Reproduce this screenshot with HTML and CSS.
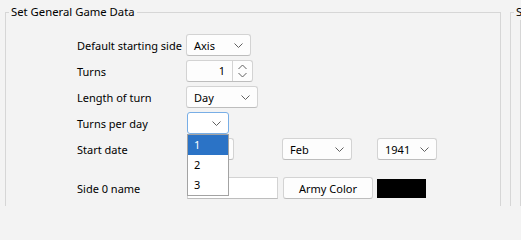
FILE: index.html
```html
<!DOCTYPE html>
<html>
<head>
<meta charset="utf-8">
<link rel="stylesheet" href="styles.css">
</head>
<body>
<div class="panes">
  <fieldset class="group main">
    <legend>Set General Game Data</legend>
    <div class="form">
      <div class="row">
        <span class="label">Default starting side</span>
        <div class="combo w-axis"><span class="val">Axis</span><svg class="chev" width="9" height="5" viewBox="0 0 9 5"><path d="M0.5 0.5 L4.5 4.5 L8.5 0.5" /></svg></div>
      </div>
      <div class="row">
        <span class="label">Turns</span>
        <div class="spin">
          <span class="num">1</span>
          <div class="spinbtn">
            <svg width="9" height="14" viewBox="0 0 9 14"><path d="M0.5 5 L4.5 1 L8.5 5" /><path d="M0.5 9 L4.5 13 L8.5 9" /></svg>
          </div>
        </div>
      </div>
      <div class="row">
        <span class="label">Length of turn</span>
        <div class="combo w-day"><span class="val">Day</span><svg class="chev" width="9" height="5" viewBox="0 0 9 5"><path d="M0.5 0.5 L4.5 4.5 L8.5 0.5" /></svg></div>
      </div>
      <div class="row">
        <span class="label">Turns per day</span>
        <div class="combo w-tpd focused"><span class="val"></span><svg class="chev" width="9" height="5" viewBox="0 0 9 5"><path d="M0.5 0.5 L4.5 4.5 L8.5 0.5" /></svg>
          <ul class="dropdown">
            <li class="sel">1</li>
            <li>2</li>
            <li>3</li>
          </ul>
        </div>
      </div>
      <div class="row">
        <span class="label">Start date</span>
        <div class="combo w-start"><span class="val"></span></div>
        <div class="combo w-month"><span class="val">Feb</span><svg class="chev" width="9" height="5" viewBox="0 0 9 5"><path d="M0.5 0.5 L4.5 4.5 L8.5 0.5" /></svg></div>
        <div class="combo w-year"><span class="val">1941</span><svg class="chev" width="9" height="5" viewBox="0 0 9 5"><path d="M0.5 0.5 L4.5 4.5 L8.5 0.5" /></svg></div>
      </div>
      <div class="row last">
        <span class="label">Side 0 name</span>
        <div class="textbox"></div>
        <div class="button">Army Color</div>
        <div class="swatch"></div>
      </div>
    </div>
  </fieldset>
  <fieldset class="group side">
    <legend>S</legend>
  </fieldset>
</div>
</body>
</html>
```

FILE: styles.css
```css
html, body {
  margin: 0;
  padding: 0;
  background: #f3f3f3;
  font-family: "Noto Sans", "Open Sans", sans-serif;
  font-size: 11px;
  color: #000;
  overflow: hidden;
  width: 521px;
  height: 206px;
}

.panes {
  display: flex;
  padding-left: 5px;
  gap: 9px;
  height: 206px;
  overflow: hidden;
}

.group {
  margin: 4px 0 0 0;
  padding: 0;
  border: 1px solid #d6d6d6;
  border-bottom: none;
  border-radius: 0;
  height: 202px;
  box-sizing: border-box;
  min-width: 0;
}

.group legend {
  margin-left: 3px;
  padding: 0 2px;
  line-height: 16px;
  height: 16px;
  font-size: 11.3px;
}

.main {
  width: 496px;
  flex: none;
}

.side {
  flex: 1;
}

.form {
  padding: 14px 0 0 71px;
  display: flex;
  flex-direction: column;
  gap: 4px;
}

.row {
  display: flex;
  align-items: center;
  height: 22px;
}

.row.last {
  margin-top: 13px;
}

.label {
  width: 109px;
  flex: none;
  white-space: nowrap;
}

.combo {
  position: relative;
  box-sizing: border-box;
  height: 22px;
  background: #fdfdfd;
  border: 1px solid #d3d3d3;
  border-bottom-color: #bdbdbd;
  border-radius: 3px;
  display: flex;
  align-items: center;
  padding-left: 7px;
  flex: none;
}

.combo .val {
  flex: 1;
}

.chev {
  margin-right: 7px;
  flex: none;
}

.chev path, .spinbtn path {
  fill: none;
  stroke: #606060;
  stroke-width: 1;
}

.w-axis { width: 65px; }
.w-day { width: 72px; }
.w-tpd { width: 42px; margin-left: 1px; }
.w-start { width: 47px; margin-left: 1px; }
.w-month { width: 70px; margin-left: 48px; }
.w-year { width: 60px; margin-left: 25px; }

.focused {
  border-color: #78aee6;
  background: #ffffff;
}

.spin {
  box-sizing: border-box;
  width: 67px;
  height: 22px;
  background: #fdfdfd;
  border: 1px solid #d3d3d3;
  border-bottom-color: #bdbdbd;
  border-radius: 3px;
  display: flex;
  align-items: stretch;
}

.spin .num {
  flex: 1;
  text-align: right;
  padding-right: 7px;
  line-height: 20px;
}

.spinbtn {
  width: 19px;
  border-left: 1px solid #d3d3d3;
  display: flex;
  align-items: center;
  justify-content: center;
}

.dropdown {
  position: absolute;
  left: -1px;
  top: 21px;
  width: 42px;
  box-sizing: border-box;
  margin: 0;
  padding: 0;
  list-style: none;
  background: #ffffff;
  border: 1px solid #a3a3a3;
  z-index: 5;
}

.dropdown li {
  height: 20px;
  line-height: 20px;
  padding-left: 6px;
}

.dropdown li.sel {
  background: #2b73c6;
  color: #ffffff;
}

.textbox {
  box-sizing: border-box;
  width: 91px;
  height: 22px;
  margin-left: 1px;
  background: #ffffff;
  border: 1px solid #d3d3d3;
  border-bottom-color: #bdbdbd;
  flex: none;
}

.button {
  box-sizing: border-box;
  width: 90px;
  height: 22px;
  margin-left: 5px;
  background: #fdfdfd;
  border: 1px solid #d3d3d3;
  border-bottom-color: #bdbdbd;
  border-radius: 3px;
  display: flex;
  align-items: center;
  justify-content: center;
  flex: none;
}

.swatch {
  width: 49px;
  height: 19px;
  margin-left: 4px;
  background: #000000;
  flex: none;
}
```
